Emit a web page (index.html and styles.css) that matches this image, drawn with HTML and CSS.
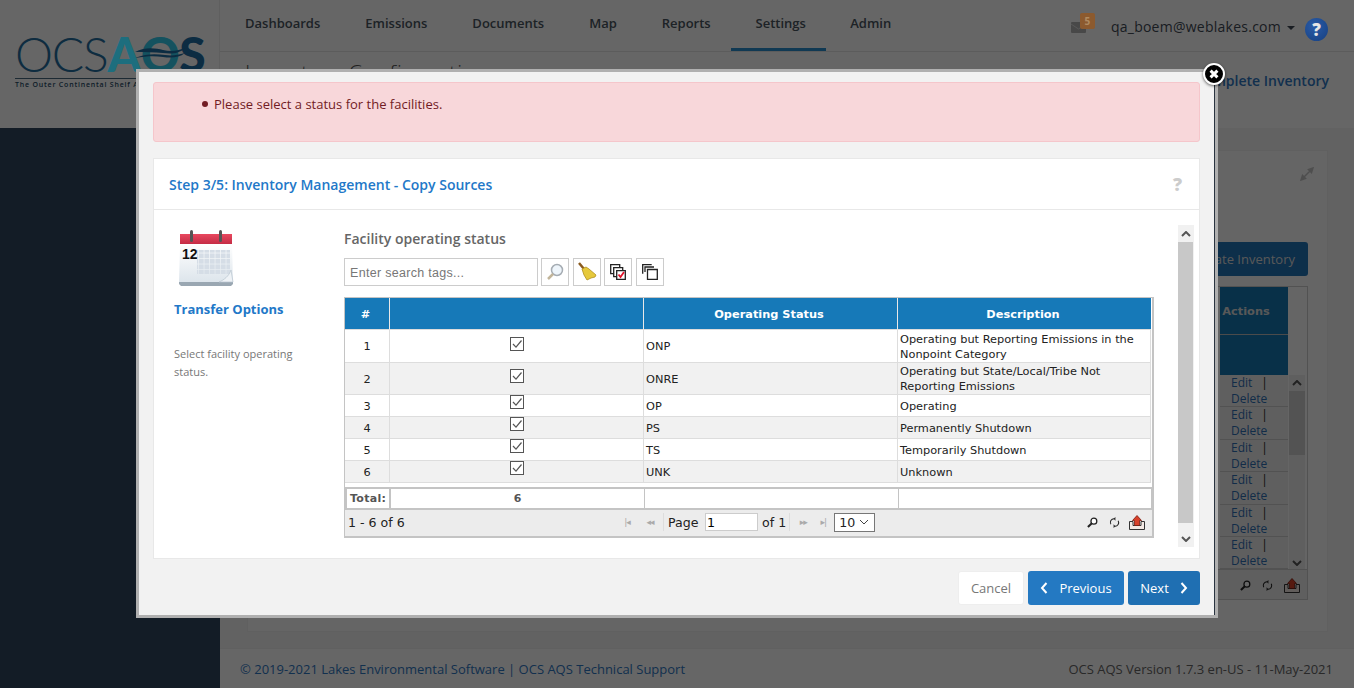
FILE: index.html
```html
<!DOCTYPE html>
<html lang="en">
<head>
<meta charset="utf-8">
<title>OCS AQS</title>
<link rel="stylesheet" href="styles.css">
</head>
<body>
<svg class="defs" width="0" height="0" aria-hidden="true">
  <symbol id="chk" viewBox="0 0 14 14">
    <rect x="0.5" y="0.5" width="13" height="13" fill="#fff" stroke="#555"/>
    <path d="M3 7l3 3.2L11.5 3.500" fill="none" stroke="#555" stroke-width="1.2"/>
  </symbol>
  <symbol id="mag" viewBox="0 0 12 12">
    <circle cx="7.5" cy="4.5" r="3.2" fill="#fff" stroke="#222" stroke-width="1.4"/>
    <path d="M5 7L1 11" stroke="#222" stroke-width="2.200"/>
  </symbol>
  <symbol id="ref" viewBox="0 0 12 12">
    <path d="M2 8A4.200 4.200 0 0 1 5.500 1.800M10 4A4.200 4.200 0 0 1 6.500 10.200" fill="none" stroke="#222" stroke-width="1.100"/>
    <path d="M7 0v4L5 2zM5 8v4l2-2z" fill="#222"/>
  </symbol>
  <symbol id="exp" viewBox="0 0 16 15">
    <path d="M.5 6.500v8h15v-8h-3.500v4h-8v-4z" fill="#f3e9e4" stroke="#333"/>
    <path d="M8 .5l4.500 5H10.500v5h-5v-5H3.500z" fill="#d8412a" stroke="#7a1c10" stroke-width=".8"/>
  </symbol>
</svg>

<div class="page">
  <header class="top">
    <div class="logo-box">
      <div class="logo">
        <div class="logo-mark"><span class="ocs">OCS</span><span class="aqs-a">A</span><span class="aqs-q">Q</span><span class="aqs-s">S</span>
          <svg class="wave" width="52" height="14" viewBox="0 0 52 14"><path d="M0 6C10 1 20 2 28 4s14 1 22-2C44 8 36 8 28 7S10 6 0 6z" fill="#0c2c42"/><path d="M0 12C12 7 22 8 30 9s12 0 20-2c-6 5-14 5-22 4S12 10 0 12z" fill="#0c2c42"/></svg>
        </div>
        <div class="logo-sub">The Outer Continental Shelf Air Quality System</div>
      </div>
    </div>
    <div class="top-main">
      <nav class="nav">
        <a class="nav-item">Dashboards</a>
        <a class="nav-item">Emissions</a>
        <a class="nav-item">Documents</a>
        <a class="nav-item">Map</a>
        <a class="nav-item">Reports</a>
        <a class="nav-item nav-active">Settings</a>
        <a class="nav-item">Admin</a>
        <div class="user">
          <span class="mail"><svg width="15" height="11" viewBox="0 0 15 11"><rect width="15" height="11" rx="1" fill="#b4b4b4"/><path d="M0 2l7.500 5L15 2" fill="none" stroke="#ddd"/></svg><b class="mail-badge">5</b></span>
          <span class="email">qa_boem@weblakes.com</span>
          <span class="caret"></span>
          <span class="help">?</span>
        </div>
      </nav>
      <div class="subbar">
        <span class="subtitle">Inventory Configuration</span>
        <span class="sublink">Complete Inventory</span>
      </div>
    </div>
  </header>

  <div class="mid">
    <aside class="side"></aside>
    <div class="main-col">
      <main class="content">
        <section class="bg-panel">
          <div class="bg-panel-head"><svg width="14" height="14" viewBox="0 0 14 14"><path d="M1 13l4.500-1.500-3-3zM13 1L8.500 2.500l3 3zM4 10l6-6" fill="#c4c4c4" stroke="#c4c4c4" stroke-width="1.500"/></svg></div>
          <div class="bg-actions"><span class="bg-btn">Create Inventory</span></div>
          <div class="bg-grid">
            <div class="bg-col">
              <div class="bg-th">Actions</div>
              <div class="bg-th2"></div>
              <div class="bg-row"><a>Edit</a><i>|</i><a>Delete</a></div>
              <div class="bg-row"><a>Edit</a><i>|</i><a>Delete</a></div>
              <div class="bg-row"><a>Edit</a><i>|</i><a>Delete</a></div>
              <div class="bg-row"><a>Edit</a><i>|</i><a>Delete</a></div>
              <div class="bg-row"><a>Edit</a><i>|</i><a>Delete</a></div>
              <div class="bg-row"><a>Edit</a><i>|</i><a>Delete</a></div>
            </div>
            <div class="bg-sb">
              <span class="bg-sb-up"><svg width="10" height="6" viewBox="0 0 10 6"><path d="M1 5l4-4 4 4" fill="none" stroke="#555" stroke-width="2"/></svg></span>
              <span class="bg-sb-thumb"></span>
              <span class="bg-sb-down"><svg width="10" height="6" viewBox="0 0 10 6"><path d="M1 1l4 4 4-4" fill="none" stroke="#555" stroke-width="2"/></svg></span>
            </div>
            <div class="bg-pager">
              <svg class="ic-mag" width="11" height="11"><use href="#mag"/></svg>
              <svg class="ic-ref" width="11" height="11"><use href="#ref"/></svg>
              <svg width="16" height="15"><use href="#exp"/></svg>
            </div>
          </div>
        </section>
      </main>
      <footer class="foot">
        <span class="foot-left">© 2019-2021 Lakes Environmental Software | OCS AQS Technical Support</span>
        <span class="foot-right">OCS AQS Version 1.7.3 en-US - 11-May-2021</span>
      </footer>
    </div>
  </div>
</div>

<div class="overlay"></div>

<div class="modal">
  <div class="close"><svg width="12" height="12" viewBox="0 0 14 14"><path d="M3 3l8 8M11 3l-8 8" stroke="#fff" stroke-width="3.500"/></svg></div>
  <div class="alert"><ul class="alert-list"><li>Please select a status for the facilities.</li></ul></div>
  <div class="card">
    <div class="card-head">
      <h2 class="card-title">Step 3/5: Inventory Management - Copy Sources</h2>
      <span class="card-q">?</span>
    </div>
    <div class="card-body">
      <div class="step-col">
        <svg class="cal" width="58" height="61" viewBox="0 0 58 61">
          <defs>
            <linearGradient id="calbody" x1="0" y1="0" x2="0" y2="1"><stop offset="0" stop-color="#fff"/><stop offset="1" stop-color="#dde5ec"/></linearGradient>
            <linearGradient id="calred" x1="0" y1="0" x2="0" y2="1"><stop offset="0" stop-color="#e8485f"/><stop offset="1" stop-color="#c42c45"/></linearGradient>
            <pattern id="calgrid" width="5.500" height="5.500" patternUnits="userSpaceOnUse"><rect width="4.800" height="4.800" fill="#d5dde6"/></pattern>
          </defs>
          <path d="M2 55h54v3l-2 2H4l-2-2z" fill="#9aa7b2"/>
          <path d="M3 18h52l1 38H2z" fill="url(#calbody)"/>
          <rect x="3" y="8" width="52" height="10" fill="url(#calred)"/>
          <rect x="13" y="4" width="3" height="12" rx="1.500" fill="#555"/>
          <rect x="42" y="4" width="3" height="12" rx="1.500" fill="#555"/>
          <rect x="20" y="24" width="33" height="24" fill="url(#calgrid)"/>
          <text x="5" y="33" class="cal-num">12</text>
          <path d="M42 56c5-2 10-6 12-12l2 12z" fill="#eef2f6" stroke="#b8c4ce" stroke-width=".7"/>
        </svg>
        <div class="step-title">Transfer Options</div>
        <p class="step-text">Select facility operating status.</p>
      </div>
      <div class="work">
        <div class="work-inner">
          <h3 class="work-title">Facility operating status</h3>
          <div class="tools">
            <input class="tags" placeholder="Enter search tags...">
            <span class="tool"><svg width="20" height="20" viewBox="0 0 20 20"><circle cx="12" cy="8" r="5.500" fill="#eef5fb" stroke="#a5acb3" stroke-width="1.500"/><path d="M8 12l-5 5" stroke="#c2b59a" stroke-width="2.500"/></svg></span>
            <span class="tool"><svg width="22" height="22" viewBox="0 0 22 22"><path d="M3 2l5 6" stroke="#8a5a1e" stroke-width="2.500"/><path d="M6 8l4-2 3 2 7 6-1 2-4 1-4 2-3-5z" fill="#e6c93c" stroke="#b08f1e" stroke-width=".8"/></svg></span>
            <span class="tool"><svg width="16" height="16" viewBox="0 0 16 16"><path d="M.7.7h9v9h-9z" fill="#fff" stroke="#222" stroke-width="1.300"/><path d="M3.700 3.700h9v9h-9z" fill="#fff" stroke="#222" stroke-width="1.300"/><path d="M6.700 6.700h8.600v8.600h-8.600z" fill="#fff" stroke="#222" stroke-width="1.300"/><path d="M8.500 10.500l2 2.500 3.500-5" fill="none" stroke="#e2122a" stroke-width="1.800"/></svg></span>
            <span class="tool"><svg width="16" height="16" viewBox="0 0 16 16"><path d="M.7 9.700v-9h9" fill="none" stroke="#222" stroke-width="1.300"/><path d="M3 8V3h9" fill="none" stroke="#222" stroke-width="1.300"/><path d="M5.500 5.500h9.800v9.800H5.500z" fill="#fff" stroke="#222" stroke-width="1.300"/></svg></span>
          </div>
          <div class="grid">
            <table class="tbl">
              <colgroup><col class="c1"><col class="c2"><col class="c3"><col class="c4"></colgroup>
              <thead><tr><th class="th-num">#</th><th></th><th class="th-txt">Operating Status</th><th class="th-txt">Description</th></tr></thead>
              <tbody>
                <tr class="r2"><td class="ctr">1</td><td class="ctr"><svg class="ck" width="14" height="14"><use href="#chk"/></svg></td><td>ONP</td><td>Operating but Reporting Emissions in the Nonpoint Category</td></tr>
                <tr class="r2 alt"><td class="ctr">2</td><td class="ctr"><svg class="ck" width="14" height="14"><use href="#chk"/></svg></td><td>ONRE</td><td>Operating but State/Local/Tribe Not Reporting Emissions</td></tr>
                <tr><td class="ctr">3</td><td class="ctr"><svg class="ck" width="14" height="14"><use href="#chk"/></svg></td><td>OP</td><td>Operating</td></tr>
                <tr class="alt"><td class="ctr">4</td><td class="ctr"><svg class="ck" width="14" height="14"><use href="#chk"/></svg></td><td>PS</td><td>Permanently Shutdown</td></tr>
                <tr><td class="ctr">5</td><td class="ctr"><svg class="ck" width="14" height="14"><use href="#chk"/></svg></td><td>TS</td><td>Temporarily Shutdown</td></tr>
                <tr class="alt"><td class="ctr">6</td><td class="ctr"><svg class="ck" width="14" height="14"><use href="#chk"/></svg></td><td>UNK</td><td>Unknown</td></tr>
              </tbody>
            </table>
            <div class="total">
              <span class="t1">Total:</span><span class="t2">6</span><span class="t3"></span><span class="t4"></span>
            </div>
            <div class="pager">
              <span class="p-left">1 - 6 of 6</span>
              <div class="p-mid">
                <span class="nav-ico">|◂</span><span class="nav-ico ni-2">◂◂</span>
                <span class="p-sep"></span>
                <span class="p-page">Page</span><input class="p-input" value="1"><span class="p-of">of 1</span>
                <span class="p-sep p-sep-2"></span>
                <span class="nav-ico ni-3">▸▸</span><span class="nav-ico ni-3">▸|</span>
                <span class="p-select">10<svg width="10" height="6" viewBox="0 0 10 6"><path d="M1 1l4 4 4-4" fill="none" stroke="#444"/></svg></span>
              </div>
              <div class="p-right">
                <svg class="ic-mag" width="11" height="11"><use href="#mag"/></svg>
                <svg class="ic-ref" width="11" height="11"><use href="#ref"/></svg>
                <svg width="16" height="15"><use href="#exp"/></svg>
              </div>
            </div>
          </div>
        </div>
        <div class="vbar">
          <span class="vbtn"><svg width="10" height="6" viewBox="0 0 10 6"><path d="M1 5l4-4 4 4" fill="none" stroke="#555" stroke-width="2"/></svg></span>
          <span class="vthumb"></span>
          <span class="vbtn"><svg width="10" height="6" viewBox="0 0 10 6"><path d="M1 1l4 4 4-4" fill="none" stroke="#555" stroke-width="2"/></svg></span>
        </div>
      </div>
    </div>
  </div>
  <div class="actions">
    <button class="btn btn-cancel">Cancel</button>
    <button class="btn btn-prev"><svg width="8" height="12" viewBox="0 0 8 12"><path d="M6.500 1L2 6l4.500 5" fill="none" stroke="#fff" stroke-width="2"/></svg>Previous</button>
    <button class="btn btn-next">Next<svg width="8" height="12" viewBox="0 0 8 12"><path d="M1.500 1L6 6l-4.500 5" fill="none" stroke="#fff" stroke-width="2"/></svg></button>
  </div>
</div>
</body>
</html>
```
FILE: styles.css
```css
* { box-sizing: border-box; }
html, body { margin: 0; padding: 0; height: 688px; overflow: hidden; }
body { font-family: "Open Sans", sans-serif; font-size: 13px; color: #333; background: #f5f5f5; }
.defs { position: absolute; }
.page { display: flex; flex-direction: column; height: 688px; }

.top { display: flex; height: 128px; background: #fff; flex: none; }
.logo-box { width: 220px; border-right: 1px solid #eee; padding: 33px 0 0 15px; flex: none; }
.logo { width: 190px; white-space: nowrap; }
.logo-mark { position: relative; z-index: 1; display: flex; height: 42px; align-items: center; line-height: 42px; font-family: "Lato", sans-serif; font-size: 48px; }
.ocs { font-weight: 300; color: #0e2c40; letter-spacing: -1.200px; }
.aqs-a, .aqs-q, .aqs-s { font-weight: 900; letter-spacing: -.5px; }
.aqs-a { color: #1d6e7e; }
.aqs-q { color: #14525f; }
.aqs-s { color: #0c2c42; }
.wave { position: absolute; left: 120px; top: 13px; }
.logo-sub { margin-top: 3px; border-top: 1px solid #4a6a80; font-size: 7px; font-weight: 600; letter-spacing: .8px; color: #1f4a66; line-height: 12px; }

.top-main { flex: 1; display: flex; flex-direction: column; min-width: 0; }
.nav { height: 52px; display: flex; align-items: stretch; border-bottom: 1px solid #e6e6e6; padding-left: 2.500px; }
.nav-item { font-size: 13px; font-weight: 600; color: #4a5560; padding: 14px 22.500px 0; white-space: nowrap; }
.nav-active { border-bottom: 3px solid #2a8fd0; margin: 0 1.500px 0 -2px; padding: 14px 0 0 4px; width: 95px; text-align: center; }
.user { margin-left: auto; display: flex; align-items: center; padding: 2px 26px 0 0; }
.mail { position: relative; width: 25px; margin-right: 15px; display: flex; }
.mail svg { margin-top: 2px; }
.mail-badge { position: absolute; z-index: 1; left: 9px; top: -7px; width: 15px; height: 16px; background: #8c5a2e; color: #b08a60; font-size: 10px; text-align: center; line-height: 16px; border-radius: 2px; }
.email { font-size: 14px; letter-spacing: .25px; color: #3f4a55; }
.caret { width: 0; height: 0; border-left: 4px solid transparent; border-right: 4px solid transparent; border-top: 4px solid #3f4a55; margin: 3px 10px 0 6px; }
.help { position: relative; z-index: 1; width: 23px; height: 23px; border-radius: 50%; background: radial-gradient(circle at 40% 35%, #2a5ca8, #163f80); color: #e6e6e6; font-weight: 800; font-size: 17px; line-height: 23px; text-align: center; margin-top: 5px; }

.subbar { flex: 1; display: flex; justify-content: space-between; padding: 6px 25px 0 25px; }
.subtitle { font-size: 21px; font-weight: 300; letter-spacing: 1px; color: #555; }
.sublink { font-size: 14px; font-weight: 600; color: #2f78c4; margin-top: 13px; }

.mid { flex: 1; display: flex; min-height: 0; }
.side { width: 220px; background: #30475f; flex: none; }
.main-col { flex: 1; display: flex; flex-direction: column; min-width: 0; }
.content { flex: 1; padding: 22px 26px 0 27px; background: #f5f5f5; min-height: 0; }
.bg-panel { background: #fcfcfc; border: 1px solid #f0f0f0; height: 482px; padding: 0 19px 0 0; }
.bg-panel-head { display: flex; justify-content: flex-end; padding: 16px 0 0; height: 70px; margin-right: -6px; }
.bg-actions { display: flex; justify-content: flex-end; height: 44px; margin-top: 21px; }
.bg-btn { background: #2275b8; color: #ddd; border-radius: 3px; width: 180px; height: 34px; font-size: 13px; line-height: 34px; text-align: right; padding-right: 13px; }
.bg-grid { margin-left: auto; width: 200px; height: 314px; border: 1px solid #ccc; position: relative; display: flex; justify-content: flex-end; overflow: hidden; }
.bg-col { width: 68px; margin-right: 19px; background: #eee; }
.bg-th { height: 48px; background: #1679b5; color: #ddd; font: 700 11.330px "DejaVu Sans", sans-serif; text-align: center; line-height: 48px; padding-right: 16px; border-bottom: 1px solid #bbb; }
.bg-th2 { height: 40px; background: #1679b5; }
.bg-row { height: 32.400px; font-size: 12px; padding-left: 11px; line-height: 16px; border-bottom: 1px solid #ccc; color: #2f6fb5; overflow: hidden; }
.bg-row i { font-style: normal; color: #222; margin-left: 9px; }
.bg-row a + i + a { display: block; }
.bg-sb { position: absolute; right: 2px; top: 88px; width: 16px; height: 196px; display: flex; flex-direction: column; background: #eee; }
.bg-sb-up, .bg-sb-down { height: 16px; flex: none; display: flex; align-items: center; justify-content: center; }
.bg-sb-thumb { height: 64px; background: #cfcfcf; margin-bottom: auto; }
.bg-pager { position: absolute; left: 0; right: 0; bottom: 0; height: 30px; background: #eee; border-top: 1px solid #ccc; display: flex; align-items: center; justify-content: flex-end; gap: 11px; padding: 2px 7px 0 0; }

.foot { height: 40px; flex: none; background: #fff; border-top: 1px solid #f0f0f0; display: flex; justify-content: space-between; align-items: center; padding: 0 21px 0 20px; font-size: 13px; }
.foot-left { color: #2f78c4; }
.foot-right { color: #666; }

.overlay { position: absolute; left: 0; top: 0; width: 1354px; height: 688px; background: rgba(0,0,0,.6); }

.modal { position: absolute; z-index: 2; left: 136px; top: 69px; width: 1082px; height: 549px; background: #f2f2f2; border: 3px solid #b0b0b0; box-shadow: inset -1px 0 #2a3440; padding: 10px 15px 0 14px; display: flex; flex-direction: column; }
.close { position: absolute; right: -10px; top: -9px; width: 22px; height: 22px; border-radius: 50%; background: #000; border: 2px solid #fff; box-shadow: 0 1px 3px rgba(0,0,0,.6); display: flex; align-items: center; justify-content: center; }
.alert { height: 60px; flex: none; background: #f8d7da; border: 1px solid #f5c6cb; border-radius: 3px; color: #721c24; }
.alert-list { margin: 12px 0 0; padding: 0 0 0 60px; font-size: 13px; line-height: 18px; list-style: none; }
.alert-list li { position: relative; }
.alert-list li::before { content: ""; position: absolute; left: -12px; top: 6px; width: 6px; height: 6px; border-radius: 50%; background: #721c24; }
.card { margin-top: 16px; height: 401px; flex: none; background: #fff; border: 1px solid #e8e8e8; display: flex; flex-direction: column; }
.card-head { height: 51px; flex: none; border-bottom: 1px solid #e8e8e8; display: flex; align-items: center; justify-content: space-between; padding: 0 17px 0 15px; }
.card-title { margin: 0; font-size: 14px; font-weight: 600; color: #2278c8; }
.card-q { font-size: 18px; font-weight: 800; color: #ccc; }
.card-body { flex: 1; display: flex; min-height: 0; }
.step-col { width: 190px; flex: none; padding: 16px 0 0 20px; }
.cal { display: block; margin: 0 0 0 3px; }
.cal-num { font: 700 14px "Liberation Sans", sans-serif; fill: #111; }
.step-title { margin-top: 13px; font-size: 13px; font-weight: 700; color: #2278c8; line-height: 18px; }
.step-text { margin: 27px 0 0; font-size: 11px; line-height: 18px; color: #777; width: 130px; }
.work { flex: 1; display: flex; padding: 15px 0 0; min-width: 0; }
.work-inner { width: 810px; flex: none; }
.work-title { margin: 5px 0 8px; font-size: 14px; font-weight: 600; color: #666; line-height: 18px; height: 20px; }
.tools { display: flex; gap: 3px; height: 28px; }
.tags { width: 194px; height: 28px; border: 1px solid #ccc; padding: 1px 5px 0; font: 12.500px "Liberation Sans", sans-serif; letter-spacing: .3px; background: #fff; outline: 0; }
.tags::placeholder { color: #777; opacity: 1; }
.tool { width: 28px; height: 28px; border: 1px solid #ccc; background: #fff; display: flex; align-items: center; justify-content: center; }
.tool:nth-of-type(2), .tool:nth-of-type(4) { margin-left: 1px; }
.grid { margin-top: 11px; border: 1px solid #c4c4c4; border-width: 1px 2px 2px 1px; width: 810px; height: 241px; background: #fff; display: flex; flex-direction: column; font-family: "DejaVu Sans", sans-serif; }
.tbl { border-collapse: separate; border-spacing: 0; table-layout: fixed; width: 806px; font-size: 11.330px; flex: none; }
.c1 { width: 45px; } .c2 { width: 254px; } .c3 { width: 254px; } .c4 { width: 253px; }
.tbl th { height: 32px; background: #1679b8; color: #fff; font-size: 11.330px; font-weight: 700; border-right: 1px solid #e8e8e8; border-bottom: 1px solid #ddd; padding: 0; }
.tbl th:last-child { border-right: 0; }
.tbl .th-num { padding-right: 3px; }
.tbl .th-txt { padding-right: 3px; }
.tbl td { height: 22px; padding: 1px 2px 0; border-right: 1px solid #ddd; border-bottom: 1px solid #ddd; color: #222; line-height: 15px; vertical-align: middle; }
.r2 td { height: 33px; }
.tbl .alt td { background: #f1f1f1; }
.tbl tr:nth-child(2).r2 td { height: 32px; }
.ctr { text-align: center; }
.ck { display: block; margin: -4px auto 4px; }
.r2 .ck { margin: -3px auto 3px; }
.total { margin-top: 4px; height: 23px; flex: none; display: flex; border-top: 2px solid #c4c4c4; border-bottom: 2px solid #c4c4c4; font-size: 11px; font-weight: 700; color: #555; line-height: 20px; }
.t1 { width: 46px; padding-left: 3px; border-left: 2px solid #c4c4c4; border-right: 2px solid #c4c4c4; letter-spacing: .3px; }
.t2 { width: 254px; text-align: center; border-right: 1px solid #c4c4c4; }
.t3 { width: 254px; border-right: 1px solid #c4c4c4; }
.t4 { flex: 1; border-right: 1px solid #c4c4c4; }
.pager { flex: 1; background: #ececec; display: flex; align-items: center; font-size: 12.600px; color: #222; padding: 0 7px 2px 3px; position: relative; }
.p-left { width: 272px; flex: none; }
.p-mid { display: flex; align-items: center; }
.nav-ico { font-size: 9px; color: #aaa; letter-spacing: -1px; width: 14px; text-align: center; }
.ni-2 { margin-left: 9px; }
.ni-3 { margin-left: 6px; }
.p-sep { width: 1px; height: 18px; background: #ddd; margin-left: 6px; }
.p-sep-2 { margin-left: 3px; }
.p-page { margin-left: 4px; width: 32px; }
.p-input { width: 53px; height: 18px; margin-left: 5px; border: 1px solid #ccc; padding: 0 1px; font: 12.600px "DejaVu Sans", sans-serif; background: #fff; }
.p-of { margin-left: 4px; }
.p-select { margin-left: 4px; width: 41px; height: 19px; border: 1px solid #777; background: #fff; display: flex; align-items: center; justify-content: space-between; padding: 0 5px 0 4px; }
.p-right { margin-left: auto; display: flex; gap: 11px; align-items: center; }
.p-right svg:last-child { margin-left: -2px; }
.vbar { margin: 0 0 11px 24px; width: 16px; display: flex; flex-direction: column; background: #f1f1f1; }
.vbtn { height: 17px; display: flex; align-items: center; justify-content: center; flex: none; }
.vthumb { flex: 1; background: #c8c8c8; width: 15px; margin-bottom: 7px; }

.actions { display: flex; justify-content: flex-end; gap: 4px; margin-top: 12px; }
.btn { height: 34px; border: 1px solid transparent; border-radius: 3px; font: 13px "Open Sans", sans-serif; padding: 0; display: inline-flex; align-items: center; justify-content: center; }
.btn-cancel { width: 66px; background: #fff; color: #777; border-color: #eee; }
.btn-prev { width: 96px; background: #2479c2; color: #fff; gap: 11px; }
.btn-next { width: 72px; background: #1f6fb2; color: #fff; gap: 11px; }
```
